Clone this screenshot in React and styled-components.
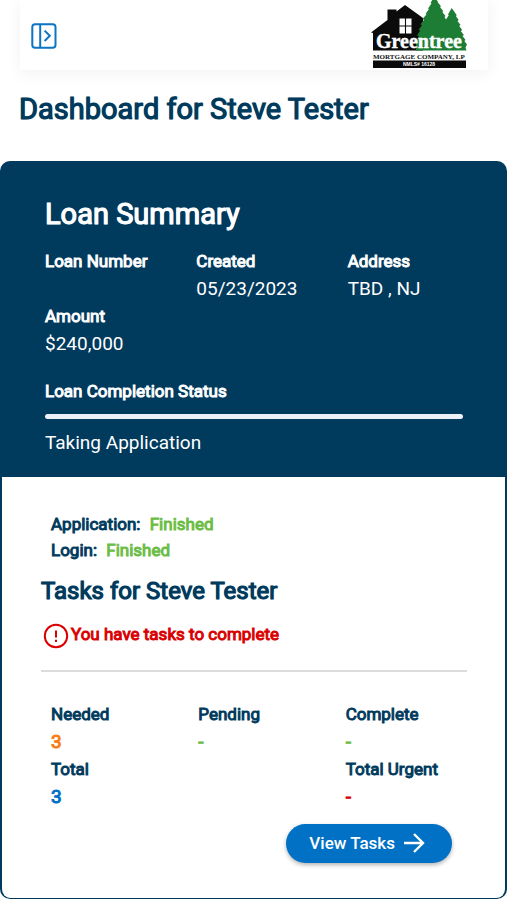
import React from "react";
import styled, { createGlobalStyle } from "styled-components";

const summaryFields = [
  { label: "Loan Number", value: "" },
  { label: "Created", value: "05/23/2023" },
  { label: "Address", value: "TBD , NJ" },
  { label: "Amount", value: "$240,000" },
];

const steps = [
  { label: "Application:", status: "Finished" },
  { label: "Login:", status: "Finished" },
];

const taskCounts = [
  { label: "Needed", value: "3", color: "#f97c16" },
  { label: "Pending", value: "-", color: "#6cbd45" },
  { label: "Complete", value: "-", color: "#6cbd45" },
  { label: "Total", value: "3", color: "#0071c5" },
  { label: "Total Urgent", value: "-", color: "#d90000", column: 3 },
];

const SidebarIcon = () => (
  <svg width="26" height="26" viewBox="0 0 26 26" fill="none" stroke="#0b74c4" strokeWidth="2">
    <rect x="1.3" y="1.3" width="23.2" height="23.4" rx="2.8" />
    <path d="M9.200 1.3v23.4" />
    <path d="M13.6 7.6l5.2 5.2-5.2 5.2" />
  </svg>
);

const AlertIcon = () => (
  <svg width="26" height="26" viewBox="0 0 26 26" fill="none" stroke="#d90000" strokeWidth="2">
    <circle cx="13" cy="13" r="11.2" />
    <path d="M13 7.4v7.2M13 16.8v2.2" />
  </svg>
);

const ArrowIcon = () => (
  <svg width="22" height="22" viewBox="0 0 22 22" fill="none" stroke="#fff" strokeWidth="2.4">
    <path d="M1 11h18.4M11 2l9 9-9 9" />
  </svg>
);

const Logo = () => (
  <LogoSvg width="96" height="70" viewBox="0 0 96 70" role="img" aria-label="Greentree Mortgage Company">
    <path fill="#0b0b0b" d="M0 32.5L16.500 20V9.500H25.500V11.500L34 5L52 18V50.500H2V33z" />
    <path fill="#fff" d="M28.500 18.500h12v15h-12z" />
    <path stroke="#0b0b0b" strokeWidth="1.1" d="M34.500 18v16M28 26h13" />
    <path
      fill="#1d7d35"
      d="M63-3L59.500 3L60.500 3.500L57 8.500L58 9L54.500 14L55.500 14.500L51.500 19L53 19.800L49.500 24.500L51 25.200L47.500 30L49.300 30.600L46 35.500L48 36L45 42V50.500H95.500L94.500 47.500L96 44.500L93.300 41L94.600 40L91.500 36L92.900 35L89.800 31L91.200 30L88.200 26L89.500 25L86.500 21L87.700 20L84.800 16L85.800 15.200L80.700 8L77 14.500L77.800 15.200L75 19.500L73.500 17L74.500 16L71.300 12L72.300 11.200L69 7L70 6.200L66.500 2L67 1.500z"
    />
    <text x="5" y="48" fontSize="20" fill="#fff" stroke="#fff" strokeWidth="0.4">Greentree</text>
    <text x="2" y="59" fontSize="7" fill="#111">MORTGAGE COMPANY, LP</text>
    <path fill="#0b0b0b" d="M2 60.500h93v7.500h-93z" />
    <SmallLogoText x="48" y="66" fontSize="5" fill="#fff" textAnchor="middle">NMLS# 16128</SmallLogoText>
  </LogoSvg>
);

const App = () => {
  return (
    <>
      <GlobalStyle />
      <TopBar>
        <MenuButton type="button" aria-label="Open menu">
          <SidebarIcon />
        </MenuButton>
        <Logo />
      </TopBar>
      <main>
        <PageTitle>Dashboard for Steve Tester</PageTitle>
        <section>
          <Summary>
            <SummaryTitle>Loan Summary</SummaryTitle>
            <FieldGrid>
              {summaryFields.map((field) => (
                <div key={field.label}>
                  <Label>{field.label}</Label>
                  {field.value && <Value>{field.value}</Value>}
                </div>
              ))}
            </FieldGrid>
            <StatusLabel id="completion">Loan Completion Status</StatusLabel>
            <ProgressTrack role="progressbar" aria-labelledby="completion" aria-valuenow={0} />
            <Value>Taking Application</Value>
          </Summary>
          <Tasks>
            <StepList>
              {steps.map((step) => (
                <Step key={step.label}>
                  {step.label} <StepStatus>{step.status}</StepStatus>
                </Step>
              ))}
            </StepList>
            <TasksTitle>Tasks for Steve Tester</TasksTitle>
            <Alert>
              <AlertIcon />
              <span>You have tasks to complete</span>
            </Alert>
            <Divider />
            <CountGrid>
              {taskCounts.map((count) => (
                <Count key={count.label} $column={count.column}>
                  <Label>{count.label}</Label>
                  <CountValue $color={count.color}>{count.value}</CountValue>
                </Count>
              ))}
            </CountGrid>
            <ViewTasksButton type="button">
              View Tasks
              <ArrowIcon />
            </ViewTasksButton>
          </Tasks>
        </section>
      </main>
    </>
  );
};

const GlobalStyle = createGlobalStyle`
  * {
    box-sizing: border-box;
  }
  body {
    margin: 0;
    background: #fff;
    color: #003a5d;
    font-family: Roboto, "Liberation Sans", sans-serif;
    font-size: 17px;
  }
`;
// Top bar
const TopBar = styled.header`
  display: flex;
  align-items: center;
  justify-content: space-between;
  height: 70px;
  margin: 0 19px 0 20px;
  padding: 0 21px 0 11px;
  box-shadow: 0 3px 16px rgba(0, 0, 0, 0.06);
`;
const MenuButton = styled.button`
  display: flex;
  padding: 2px 0 0;
  border: none;
  background: none;
  cursor: pointer;
`;
const LogoSvg = styled.svg`
  font-family: "Liberation Serif", serif;
  font-weight: 700;
`;
const SmallLogoText = styled.text`
  font-family: "Liberation Sans", sans-serif;
`;
// Headings
const Heading = styled.h2`
  margin: 0;
  font-weight: 400;
  text-shadow: 0 0 1px currentColor;
  -webkit-text-stroke: 1px currentColor;
`;
const PageTitle = styled(Heading).attrs({ as: "h1" })`
  padding: 22px 19px 35px;
  font-size: 29px;
  line-height: 34px;
`;
const SummaryTitle = styled(Heading)`
  font-size: 29px;
  line-height: 34px;
`;
const TasksTitle = styled(Heading)`
  margin-top: 12px;
  font-size: 24px;
  line-height: 32px;
`;
// Loan summary
const Summary = styled.div`
  padding: 36px 44px 21px 45px;
  border-radius: 10px 10px 0 0;
  background: #003a5d;
  color: #fff;
`;
const FieldGrid = styled.div`
  display: grid;
  grid-template-columns: repeat(3, 1fr);
  column-gap: 36px;
  margin-top: 16px;
`;
const Label = styled.div`
  font-size: 17px;
  line-height: 28px;
  white-space: nowrap;
  -webkit-text-stroke: 1px currentColor;
`;
const Value = styled.div`
  font-size: 19px;
  line-height: 27px;
`;
const StatusLabel = styled(Label)`
  margin-top: 20px;
`;
const ProgressTrack = styled.div`
  height: 5px;
  margin: 9px 0 10px;
  border-radius: 3px;
  background: #eef0f8;
`;
// Tasks
const Tasks = styled.div`
  display: flex;
  flex-direction: column;
  padding: 34px 38px 35px 39px;
  border: 2px solid #003a5d;
  border-width: 0 2px 1px;
  border-radius: 0 0 10px 10px;
`;
const StepList = styled.div`
  padding: 0 10px;
`;
const Step = styled.div`
  line-height: 26px;
  -webkit-text-stroke: 1px currentColor;
`;
const StepStatus = styled.span`
  margin-left: 5px;
  color: #6cbd45;
`;
const Alert = styled.div`
  display: flex;
  gap: 2px;
  margin-top: 16px;
  padding-left: 2px;
  color: #d90000;
  line-height: 22px;
  -webkit-text-stroke: 1px currentColor;
`;
const Divider = styled.hr`
  width: 100%;
  height: 2px;
  margin: 21px 0 28px;
  border: none;
  background: #dcdcdc;
`;
const CountGrid = styled.div`
  display: grid;
  grid-template-columns: repeat(3, 1fr);
  column-gap: 36px;
  padding: 0 10px;
`;
const Count = styled.div`
  grid-column: ${({ $column }) => $column || "auto"};
`;
const CountValue = styled.div`
  color: ${({ $color }) => $color};
  font-size: 19px;
  line-height: 27px;
  -webkit-text-stroke: 1px currentColor;
`;
const ViewTasksButton = styled.button`
  display: flex;
  align-items: center;
  align-self: flex-end;
  gap: 8px;
  margin: 14px 15px 0 0;
  padding: 0 27px 2px 23px;
  height: 39px;
  border: none;
  border-radius: 20px;
  background: #0071c5;
  box-shadow: 0 2px 4px rgba(0, 0, 0, 0.3);
  color: #fff;
  font-family: inherit;
  font-size: 17px;
  font-weight: 500;
  cursor: pointer;
`;

export default App;
